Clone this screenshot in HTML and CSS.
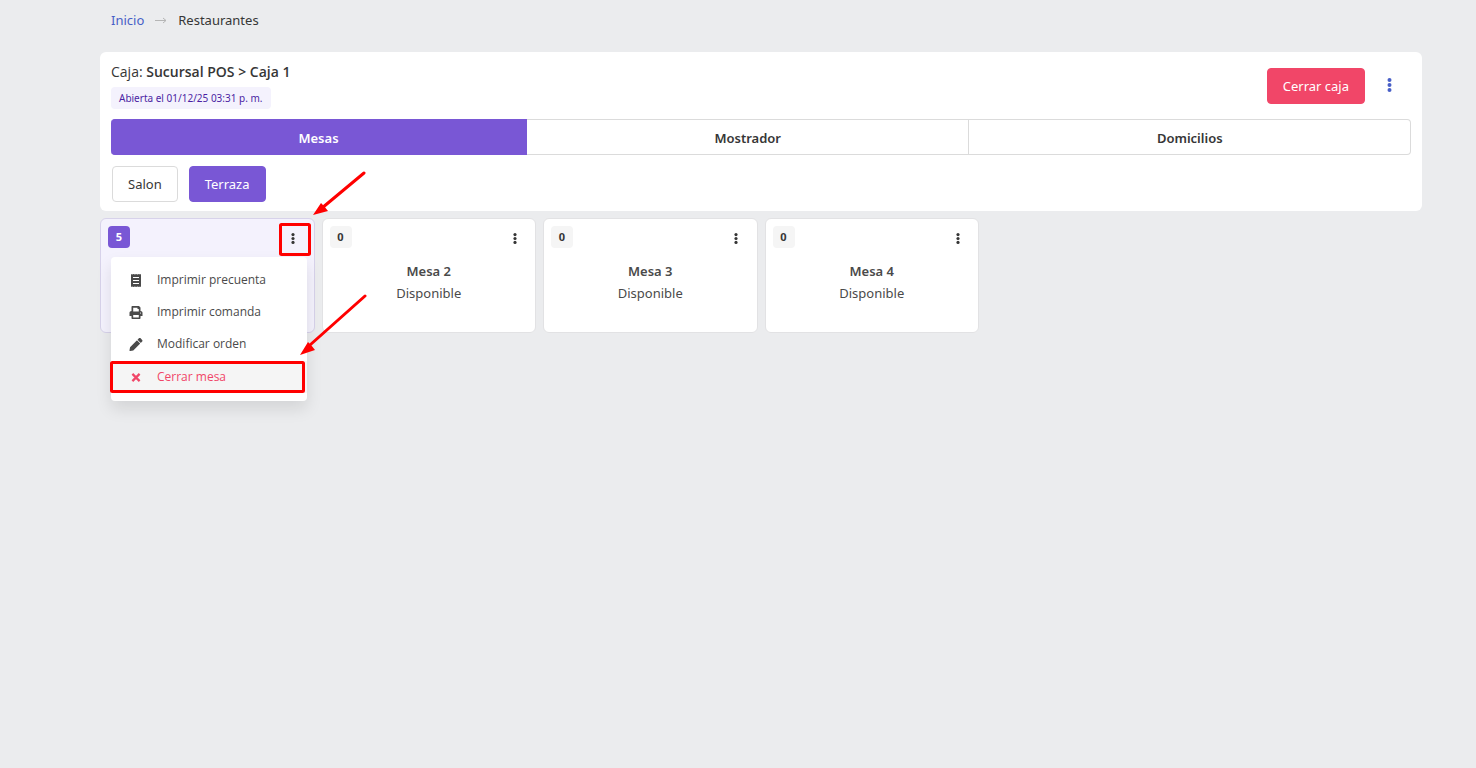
FILE: index.html
```html
<!DOCTYPE html>
<html lang="es">
<head>
    <meta charset="UTF-8">
    <meta name="viewport" content="width=device-width, initial-scale=1.0">
    <title>Restaurantes</title>
    <link rel="stylesheet" href="styles.css">
</head>
<body>

<svg class="sprite" aria-hidden="true">
    <symbol id="dots" viewBox="0 0 4 14">
        <circle cx="2" cy="2" r="2"/><circle cx="2" cy="7" r="2"/><circle cx="2" cy="12" r="2"/>
    </symbol>
    <symbol id="arrow" viewBox="0 0 12 8">
        <path fill="none" stroke="currentColor" d="M0 4.500h11M8 2l3 2.500L8 7"/>
    </symbol>
    <symbol id="receipt" viewBox="0 0 14 13">
        <path fill-rule="evenodd" d="M2 0l1 .6L4.500 0 6 .6 7 0l1.500.6L10 0l1 .6L12 0v13l-1-.6-1 .6-1.500-.6L7 13l-1-.6-1.500.6L3 12.400 2 13zM4 3v1h6V3zM4 6v1h6V6zM4 9v1h6V9z"/>
    </symbol>
    <symbol id="print" viewBox="0 0 14 13">
        <path fill-rule="evenodd" d="M2.500 1c0-.6.4-1 1-1H10l1.500 1.500V5c1.100 0 2 .7 2 1.800V10h-2v2c0 .6-.4 1-1 1h-7c-.6 0-1-.4-1-1v-2h-2V6.800C.5 5.700 1.400 5 2.500 5zM4.200 1.700V5.500h5.600V3H8.500V1.700zM4.200 9v2.400h5.600V9zM11.500 6.400a.6.600 0 1 0 0 1.200.6.600 0 0 0 0-1.200z"/>
    </symbol>
    <symbol id="pencil" viewBox="0 0 512 512">
        <path d="M498 142l-46 46c-5 5-13 5-17 0L324 77c-5-5-5-12 0-17l46-46c19-19 49-19 68 0l60 60c19 19 19 49 0 68zM285 99L22 362 .4 484c-3 16 11 30 28 28l121-22 263-262c5-5 5-13 0-17L302 99c-5-5-12-5-17 0z"/>
    </symbol>
    <symbol id="times" viewBox="0 0 10 10">
        <path fill="none" stroke="currentColor" stroke-width="2.500" d="M1 1l8 8M9 1L1 9"/>
    </symbol>
</svg>

<main class="page">
    <nav class="breadcrumb" aria-label="Ruta">
        <a href="#">Inicio</a>
        <svg class="separator"><use href="#arrow"/></svg>
        <span>Restaurantes</span>
    </nav>

    <section class="box">
        <div class="box-header">
            <div>
                <div class="register">Caja: <strong>Sucursal POS &gt; Caja 1</strong></div>
                <span class="tag">Abierta el 01/12/25 03:31 p. m.</span>
            </div>
            <div class="actions">
                <button class="button is-danger">Cerrar caja</button>
                <button class="dots-button is-link" aria-label="Opciones de caja"><svg><use href="#dots"/></svg></button>
            </div>
        </div>
        <div class="tabs">
            <button class="tab is-active">Mesas</button>
            <button class="tab">Mostrador</button>
            <button class="tab">Domicilios</button>
        </div>
        <div class="zones">
            <button class="button">Salon</button>
            <button class="button is-primary">Terraza</button>
        </div>
    </section>

    <section class="tables">
        <article class="card is-busy">
            <div class="card-header">
                <span class="count">5</span>
                <button class="dots-button" aria-label="Opciones de mesa"><svg><use href="#dots"/></svg></button>
            </div>
            <div class="dropdown">
                <button class="item"><svg><use href="#receipt"/></svg>Imprimir precuenta</button>
                <button class="item"><svg><use href="#print"/></svg>Imprimir comanda</button>
                <button class="item"><svg><use href="#pencil"/></svg>Modificar orden</button>
                <button class="item is-close"><svg><use href="#times"/></svg>Cerrar mesa</button>
            </div>
        </article>
        <article class="card">
            <div class="card-header">
                <span class="count">0</span>
                <button class="dots-button" aria-label="Opciones de mesa 2"><svg><use href="#dots"/></svg></button>
            </div>
            <h2>Mesa 2</h2>
            <p>Disponible</p>
        </article>
        <article class="card">
            <div class="card-header">
                <span class="count">0</span>
                <button class="dots-button" aria-label="Opciones de mesa 3"><svg><use href="#dots"/></svg></button>
            </div>
            <h2>Mesa 3</h2>
            <p>Disponible</p>
        </article>
        <article class="card">
            <div class="card-header">
                <span class="count">0</span>
                <button class="dots-button" aria-label="Opciones de mesa 4"><svg><use href="#dots"/></svg></button>
            </div>
            <h2>Mesa 4</h2>
            <p>Disponible</p>
        </article>
    </section>
</main>

<!-- Marcas de la guía -->
<svg class="marks" width="400" height="420" aria-hidden="true">
    <g fill="none" stroke="#ff0000" stroke-width="3">
        <rect x="280.500" y="224.500" width="29" height="30" rx="1"/>
        <rect x="111.500" y="362.500" width="192" height="29" rx="1"/>
        <path stroke-linecap="round" d="M364 173L322 208M365 296L310 345"/>
    </g>
    <path fill="#ff0000" d="M313 215l8-12 3 3 4 5zM300 355l8-13 3 3 4 5z"/>
</svg>

</body>
</html>
```

FILE: styles.css
```css
:root {
    --bg: #ebecee;
    --text: #363636;
    --text-soft: #4a4a4a;
    --border: #dbdbdb;
    --primary: #7957d5;
    --primary-light: #f4f2fd;
    --danger: #f14668;
    --link: #485fc7;
}
* {
    box-sizing: border-box;
}
body {
    margin: 0;
    background: var(--bg);
    color: var(--text);
    font-family: 'Segoe UI', 'Noto Sans', 'Open Sans', sans-serif;
    font-size: 13px;
    line-height: 20px;
}
button {
    font: inherit;
    color: inherit;
    cursor: pointer;
}
svg {
    fill: currentColor;
}
.sprite {
    display: none;
}
.page {
    min-height: 100vh;
    padding: 10px 54px 10px 100px;
}
.breadcrumb {
    display: flex;
    align-items: center;
    gap: 11px;
    padding: 0 11px;
    margin-bottom: 22px;
}
.breadcrumb a {
    color: var(--link);
    text-decoration: none;
}
.separator {
    width: 12px;
    height: 8px;
    color: #b5b5b5;
}
.box {
    background: #fff;
    border-radius: 6px;
    padding: 10px 11px 9px;
}
.box-header {
    display: flex;
    justify-content: space-between;
    align-items: flex-start;
}
.register {
    font-family: 'Segoe UI', 'Open Sans', sans-serif;
    font-size: 14px;
}
strong {
    font-weight: 600;
}
.tag {
    display: inline-block;
    height: 22px;
    margin: 5px 0 10px;
    padding: 0 8px;
    border-radius: 4px;
    background: var(--primary-light);
    color: #4b1fa3;
    font-size: 10px;
    line-height: 22px;
    vertical-align: top;
}
.actions {
    display: flex;
    align-items: center;
    gap: 16px;
    padding: 6px 13px 0 0;
}
.button {
    height: 36px;
    padding: 0 15px;
    border: 1px solid var(--border);
    border-radius: 4px;
    background: #fff;
}
.button.is-danger {
    background: var(--danger);
    border-color: var(--danger);
    color: #fff;
}
.button.is-primary {
    background: var(--primary);
    border-color: var(--primary);
    color: #fff;
}
.dots-button {
    display: flex;
    justify-content: center;
    align-items: center;
    width: 17px;
    height: 22px;
    padding: 2px 0 0;
    border: none;
    background: none;
}
.dots-button svg {
    width: 4px;
    height: 11px;
}
.dots-button.is-link {
    padding: 0 0 2px;
    color: var(--link);
}
.dots-button.is-link svg {
    width: 5px;
    height: 14px;
}
.tabs {
    display: flex;
}
.tab {
    flex: 1 1 auto;
    height: 36px;
    padding: 2px 6px 0;
    border: 1px solid var(--border);
    border-left-width: 0;
    background: #fff;
    font-weight: 600;
}
.tab:first-child {
    border-radius: 4px 0 0 4px;
}
.tab:last-child {
    border-radius: 0 4px 4px 0;
}
.tab.is-active {
    background: var(--primary);
    border-color: var(--primary);
    color: #fff;
}
.zones {
    display: flex;
    gap: 11px;
    padding: 11px 1px 0;
}
.tables {
    display: grid;
    grid-template-columns: repeat(6, 1fr);
    gap: 7px;
    margin-top: 7px;
}
.card {
    position: relative;
    height: 115px;
    padding: 7px;
    border: 1px solid #e2e2e4;
    border-radius: 6px;
    background: #fff;
    color: var(--text-soft);
    text-align: center;
}
.card.is-busy {
    background: var(--primary-light);
    border-color: #d7d2ea;
}
.card-header {
    display: flex;
    justify-content: space-between;
    align-items: center;
    margin-bottom: 12px;
    padding-right: 5px;
    color: var(--text);
}
.count {
    width: 22px;
    height: 22px;
    border-radius: 4px;
    background: #f5f5f5;
    font-size: 11px;
    font-weight: 700;
    line-height: 22px;
}
.is-busy .count {
    background: var(--primary);
    color: #fff;
}
.card h2,
.card p {
    margin: 0;
    font-size: 13px;
    line-height: 22px;
}
.card h2 {
    font-weight: 600;
}
.dropdown {
    position: absolute;
    top: 38px;
    left: 10px;
    z-index: 1;
    width: 196px;
    padding: 7px 0 8px;
    border-radius: 4px;
    background: #fff;
    box-shadow: 0 8px 16px rgba(10, 10, 10, 0.1);
}
.item {
    display: flex;
    align-items: center;
    gap: 14px;
    width: 100%;
    height: 32px;
    padding: 0 18px;
    border: none;
    background: none;
    color: var(--text-soft);
    font-family: 'Segoe UI', 'Open Sans', sans-serif;
    font-size: 12px;
}
.item svg {
    width: 14px;
    height: 13px;
}
.item.is-close {
    margin-top: 1px;
    background: #f5f5f5;
    color: var(--danger);
}
.item.is-close svg {
    height: 9px;
}
.marks {
    position: absolute;
    top: 0;
    left: 0;
    z-index: 2;
    pointer-events: none;
}
```
